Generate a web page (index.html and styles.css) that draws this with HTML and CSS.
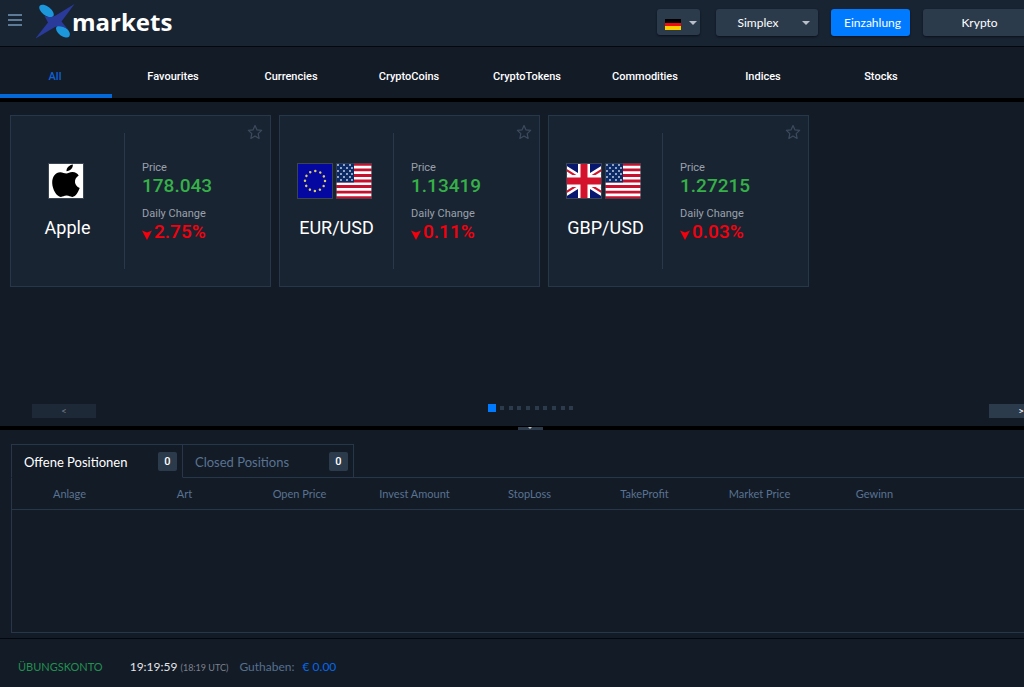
FILE: index.html
```html
<!DOCTYPE html>
<html lang="de">
<head>
    <meta charset="UTF-8">
    <meta name="viewport" content="width=device-width, initial-scale=1.0">
    <title>Xmarkets</title>
    <link rel="stylesheet" href="styles.css">
</head>
<body>
    <svg width="0" height="0" class="defs" aria-hidden="true">
        <symbol id="star" viewBox="0 0 16 16">
            <path d="M8 1.5l2 4.4 4.6.5-3.4 3.2.9 4.8L8 12.1l-4.1 2.3.9-4.8L1.4 6.4 6 5.9z" fill="none" stroke="#3c4b5c" stroke-width="1.2" stroke-linejoin="round"/>
        </symbol>
        <symbol id="down" viewBox="0 0 10 10">
            <path d="M0 0.5l5 2 5-2L5 10z" fill="#f5000c"/>
        </symbol>
        <symbol id="flag-us" viewBox="0 0 36 36">
            <rect width="36" height="36" fill="#fff"/>
            <path d="M0 1.4h36M0 6.9h36M0 12.5h36M0 18h36M0 23.5h36M0 29.1h36M0 34.6h36" stroke="#c8102e" stroke-width="2.8"/>
            <rect width="18" height="19.4" fill="#0b2a66"/>
            <path d="M2 2h0M8 2h0M14 2h0M5 5h0M11 5h0M16 5h0M2 8h0M8 8h0M14 8h0M5 11h0M11 11h0M16 11h0M2 14h0M8 14h0M14 14h0M5 17h0M11 17h0M16 17h0" stroke="#d5dcea" stroke-width="1.8" stroke-linecap="round"/>
            <rect x="0.5" y="0.5" width="35" height="35" fill="none" stroke="#3a4452" stroke-opacity="0.7"/>
        </symbol>
        <symbol id="flag-eu" viewBox="0 0 36 36">
            <rect width="36" height="36" fill="#0407a0"/>
            <circle cx="18" cy="18" r="10" fill="none" stroke="#d8cc62" stroke-width="2.5" stroke-linecap="round" stroke-dasharray="0.01 5.226"/>
            <rect x="0.5" y="0.5" width="35" height="35" fill="none" stroke="#3a4452"/>
        </symbol>
        <symbol id="flag-gb" viewBox="0 0 36 36">
            <rect width="36" height="36" fill="#08186f"/>
            <path d="M-6 3L42 33M42 3L-6 33" stroke="#fff" stroke-width="7"/>
            <path d="M-6 3L42 33M42 3L-6 33" stroke="#d5122c" stroke-width="2"/>
            <path d="M18 0v36M0 18h36" stroke="#fff" stroke-width="12"/>
            <path d="M18 0v36M0 18h36" stroke="#d5122c" stroke-width="7"/>
            <rect x="0.5" y="0.5" width="35" height="35" fill="none" stroke="#3a4452"/>
        </symbol>
        <symbol id="apple" viewBox="0 0 36 36">
            <rect x="0.5" y="0.5" width="35" height="35" fill="#fff" stroke="#3a4452"/>
            <path d="M24.8 1.5c.4 3.5-2.7 6.6-6.3 6.7-.3-3.3 2.9-6.4 6.3-6.7z"/>
            <path d="M18.3 10.5c2-.1 3.4-1.5 6.3-1.4 2.6.1 4.8 1.4 6.1 3.4-5.5 3.4-4.6 10.3 1 12.5-1.2 3.4-3.9 8.7-7.3 8.9-2.2.1-3-1.3-5.8-1.3s-3.7 1.3-5.7 1.3C8.6 33.9 4.4 26.3 4.2 20 4 13.5 7.7 9.3 12.2 9.2c2.6 0 4.3 1.3 6.1 1.3z"/>
        </symbol>
    </svg>

    <div class="app">
        <header class="topbar">
            <button type="button" class="menu-btn" aria-label="Menü">
                <span></span><span></span><span></span>
            </button>
            <a href="#" class="logo">
                <svg width="40" height="36" viewBox="0 0 40 36" aria-hidden="true">
                    <ellipse cx="10.5" cy="7" rx="8.5" ry="4.5" transform="rotate(38 10.5 7)" fill="#1c97dc"/>
                    <ellipse cx="27" cy="27.5" rx="8" ry="4.5" transform="rotate(36 27 27.5)" fill="#1c97dc"/>
                    <path d="M38.5 0L25.5 17.5 32 25.5C27 22.5 23 21.5 19 23L-.5 34.5 12 18.5 8.5 12c4 1.5 7.5 1.5 12-1z" fill="#293a9b"/>
                </svg>
                <span>markets</span>
            </a>
            <div class="actions">
                <button type="button" class="btn lang" aria-label="Deutsch">
                    <svg width="16" height="11" viewBox="0 0 16 11" aria-hidden="true">
                        <rect width="16" height="4" fill="#000"/>
                        <rect y="4" width="16" height="4" fill="#f20a0a"/>
                        <rect y="7" width="16" height="4" fill="#ffce00"/>
                    </svg>
                    <i class="caret"></i>
                </button>
                <div class="select">
                    <select class="btn" aria-label="Ansicht">
                        <option>Simplex</option>
                    </select>
                    <i class="caret"></i>
                </div>
                <button type="button" class="btn primary">Einzahlung</button>
                <button type="button" class="btn wide">Krypto</button>
            </div>
        </header>

        <nav class="categories">
            <a href="#" class="active">All</a>
            <a href="#">Favourites</a>
            <a href="#">Currencies</a>
            <a href="#">CryptoCoins</a>
            <a href="#">CryptoTokens</a>
            <a href="#">Commodities</a>
            <a href="#">Indices</a>
            <a href="#">Stocks</a>
        </nav>

        <main class="markets">
            <div class="cards">
                <article class="card">
                    <div class="asset">
                        <div class="icons">
                            <svg><use href="#apple"/></svg>
                        </div>
                        <h2>Apple</h2>
                    </div>
                    <div class="stats">
                        <p class="label">Price</p>
                        <p class="value up">178.043</p>
                        <p class="label">Daily Change</p>
                        <p class="value down"><svg><use href="#down"/></svg>2.75%</p>
                    </div>
                    <button type="button" class="fav" aria-label="Favourite"><svg><use href="#star"/></svg></button>
                </article>
                <article class="card">
                    <div class="asset">
                        <div class="icons">
                            <svg><use href="#flag-eu"/></svg>
                            <svg><use href="#flag-us"/></svg>
                        </div>
                        <h2>EUR/USD</h2>
                    </div>
                    <div class="stats">
                        <p class="label">Price</p>
                        <p class="value up">1.13419</p>
                        <p class="label">Daily Change</p>
                        <p class="value down"><svg><use href="#down"/></svg>0.11%</p>
                    </div>
                    <button type="button" class="fav" aria-label="Favourite"><svg><use href="#star"/></svg></button>
                </article>
                <article class="card">
                    <div class="asset">
                        <div class="icons">
                            <svg><use href="#flag-gb"/></svg>
                            <svg><use href="#flag-us"/></svg>
                        </div>
                        <h2>GBP/USD</h2>
                    </div>
                    <div class="stats">
                        <p class="label">Price</p>
                        <p class="value up">1.27215</p>
                        <p class="label">Daily Change</p>
                        <p class="value down"><svg><use href="#down"/></svg>0.03%</p>
                    </div>
                    <button type="button" class="fav" aria-label="Favourite"><svg><use href="#star"/></svg></button>
                </article>
            </div>
            <div class="pager">
                <button type="button" class="page-btn" disabled>&lt;</button>
                <div class="dots">
                    <span class="current"></span><span></span><span></span><span></span><span></span>
                    <span></span><span></span><span></span><span></span><span></span>
                </div>
                <button type="button" class="page-btn">&gt;</button>
            </div>
        </main>

        <div class="splitter">
            <button type="button" aria-label="Einklappen"><i class="caret"></i></button>
        </div>

        <section class="positions">
            <div class="tabs">
                <button type="button" class="tab active">Offene Positionen <span class="count">0</span></button>
                <button type="button" class="tab">Closed Positions <span class="count">0</span></button>
            </div>
            <div class="table-box">
                <table>
                    <thead>
                        <tr>
                            <th>Anlage</th>
                            <th>Art</th>
                            <th>Open Price</th>
                            <th>Invest Amount</th>
                            <th>StopLoss</th>
                            <th>TakeProfit</th>
                            <th>Market Price</th>
                            <th>Gewinn</th>
                            <th class="rest"></th>
                        </tr>
                    </thead>
                </table>
            </div>
        </section>

        <footer class="status">
            <span class="account">ÜBUNGSKONTO</span>
            <span class="time">19:19:59 <small>(18:19 UTC)</small></span>
            <span class="balance">Guthaben: <b>€ 0.00</b></span>
        </footer>
    </div>
</body>
</html>
```
FILE: styles.css
```css
* {
    box-sizing: border-box;
}

body {
    margin: 0;
    background-color: #131b27;
    color: #fff;
    font-family: Lato, sans-serif;
    font-size: 12px;
    overflow: hidden;
}

button, select {
    font-family: inherit;
    font-size: 12px;
    color: #fff;
    border: none;
    padding: 0;
    cursor: pointer;
}

a {
    color: inherit;
    text-decoration: none;
}

.defs {
    position: absolute;
}

.app {
    display: flex;
    flex-direction: column;
    min-width: 1060px;
    height: 100vh;
}

/* top bar */
.topbar {
    display: flex;
    align-items: center;
    height: 47px;
    padding: 0 24px 2px 8px;
    background-color: #192433;
    border-bottom: 1px solid #04070b;
}

.menu-btn {
    display: flex;
    flex-direction: column;
    gap: 3px;
    width: 14px;
    margin-bottom: 4px;
    background: none;
}

.menu-btn span {
    height: 2px;
    background-color: #5d7a96;
}

.logo {
    display: flex;
    align-items: center;
    margin-left: 14px;
    font-family: "Open Sans", sans-serif;
    font-size: 24px;
    font-weight: bold;
    line-height: 36px;
}

.logo span {
    margin-left: -4px;
}

.actions {
    display: flex;
    align-items: center;
    gap: 13px;
    margin-left: auto;
}

.btn {
    height: 27px;
    padding: 0 13px;
    border-radius: 3px;
    background-color: #2c3b4c;
    box-shadow: 0 1px 2px #0b111a;
}

.lang {
    display: flex;
    align-items: center;
    justify-content: space-between;
    width: 43px;
    height: 26px;
    margin-right: 3px;
    padding: 4px 3px 0 8px;
}

.lang .caret {
    margin-bottom: 2px;
}

.caret {
    border: 4px solid transparent;
    border-top-color: #b9c0c8;
    border-bottom: none;
}

.select {
    position: relative;
}

.select select {
    width: 102px;
    padding: 0 18px 0 0;
    appearance: none;
    text-align: center;
    text-align-last: center;
}

.select .caret {
    position: absolute;
    top: 12px;
    right: 8px;
    pointer-events: none;
}

.primary {
    width: 79px;
    background-color: #007aff;
}

.wide {
    width: 113px;
}

/* categories */
.categories {
    display: flex;
    gap: 4px;
    height: 55px;
    margin-left: -2px;
    border-bottom: 4px solid #000;
    font-family: Roboto, sans-serif;
    font-size: 11px;
    font-weight: 500;
    line-height: 16px;
}

.categories a {
    width: 114px;
    padding-top: 22px;
    text-align: center;
    border-bottom: 4px solid transparent;
}

.categories .active {
    color: #0f62d6;
    border-color: #0568d8;
}

/* market cards */
.markets {
    display: flex;
    flex-direction: column;
    justify-content: space-between;
    height: 324px;
    padding: 13px 7px 8px 10px;
    font-family: Roboto, sans-serif;
}

.cards {
    display: flex;
    gap: 8px;
}

.card {
    position: relative;
    display: flex;
    width: 261px;
    height: 172px;
    padding: 17px 0;
    background-color: #192433;
    border: 1px solid #27374a;
}

.asset {
    display: flex;
    flex-direction: column;
    align-items: center;
    justify-content: center;
    gap: 17px;
    width: 114px;
    border-right: 1px solid #2a394a;
}

.icons {
    display: flex;
    gap: 3px;
    padding-right: 4px;
}

.icons svg {
    width: 36px;
    height: 36px;
}

.asset h2 {
    margin: 0;
    font-size: 18px;
    font-weight: 400;
    line-height: 24px;
}

.stats {
    display: flex;
    flex-direction: column;
    justify-content: center;
    padding: 0 0 2px 17px;
}

.stats p {
    margin: 0;
}

.label {
    color: #9aa1aa;
    font-size: 11px;
    line-height: 18px;
}

.value {
    font-size: 19px;
    font-weight: 500;
    line-height: 18px;
}

.value + .label {
    padding-top: 10px;
}

.value svg {
    width: 10px;
    height: 10px;
    margin-right: 2px;
    vertical-align: -2px;
}

.up {
    color: #35b148;
}

.down {
    color: #f5000c;
}

.fav {
    position: absolute;
    top: 8px;
    right: 7px;
    background: none;
}

.fav svg {
    display: block;
    width: 16px;
    height: 16px;
}

.pager {
    display: flex;
    align-items: flex-end;
    padding-left: 22px;
}

.page-btn {
    width: 64px;
    height: 14px;
    background-color: #2c3b4c;
    font-size: 9px;
    line-height: 14px;
}

.page-btn:disabled {
    background-color: #1d2936;
    color: #6f7a86;
}

.dots {
    display: flex;
    align-items: center;
    justify-content: space-between;
    width: 110px;
    margin: 0 auto 6px;
    padding-right: 24px;
}

.dots span {
    width: 4px;
    height: 4px;
    background-color: #2c3b4c;
}

.dots .current {
    width: 8px;
    height: 8px;
    background-color: #007aff;
}

.splitter {
    display: flex;
    justify-content: center;
    align-items: flex-end;
    height: 4px;
    background-color: #000;
}

.splitter button {
    display: flex;
    justify-content: center;
    width: 25px;
    height: 3px;
    background-color: #2c3b4c;
}

.splitter .caret {
    border-width: 2px;
    border-bottom: none;
}

/* positions */
.positions {
    display: flex;
    flex: 1;
    flex-direction: column;
    padding: 14px 0 5px 11px;
}

.tabs {
    display: flex;
}

.tab {
    display: flex;
    align-items: center;
    justify-content: space-between;
    width: 171px;
    height: 34px;
    margin-bottom: -1px;
    padding: 1px 5px 0 12px;
    background-color: #131b27;
    border: 1px solid #27374a;
    border-left: none;
    color: #5a7391;
    font-size: 13px;
    line-height: 18px;
}

.tab.active {
    width: 172px;
    border-left: 1px solid #27374a;
    border-bottom-color: #131b27;
    color: #fff;
    z-index: 1;
}

.count {
    width: 19px;
    border-radius: 2px;
    background-color: #2c3b4c;
    color: #fff;
    font-family: Roboto, sans-serif;
    font-size: 11px;
    font-weight: 500;
    line-height: 19px;
}

.table-box {
    flex: 1;
    border: 1px solid #27374a;
    border-right: none;
}

table {
    width: 100%;
    table-layout: fixed;
    border-collapse: collapse;
}

th {
    width: 115px;
    height: 31px;
    padding: 0;
    border-bottom: 1px solid #27374a;
    color: #5a7391;
    font-size: 11px;
    font-weight: 400;
}

th.rest {
    width: auto;
}

/* status bar */
.status {
    display: flex;
    align-items: baseline;
    height: 49px;
    padding: 20px 18px 0;
    border-top: 1px solid #04070b;
    line-height: 16px;
    white-space: nowrap;
}

.account {
    color: #22914f;
    font-size: 11px;
}

.time {
    margin-left: 27px;
    color: #e3e5e8;
}

.time small {
    color: #7c828b;
    font-size: 9px;
}

.balance {
    margin-left: 11px;
    color: #56708e;
}

.balance b {
    margin-left: 5px;
    color: #0568e8;
    font-weight: 400;
}
```
